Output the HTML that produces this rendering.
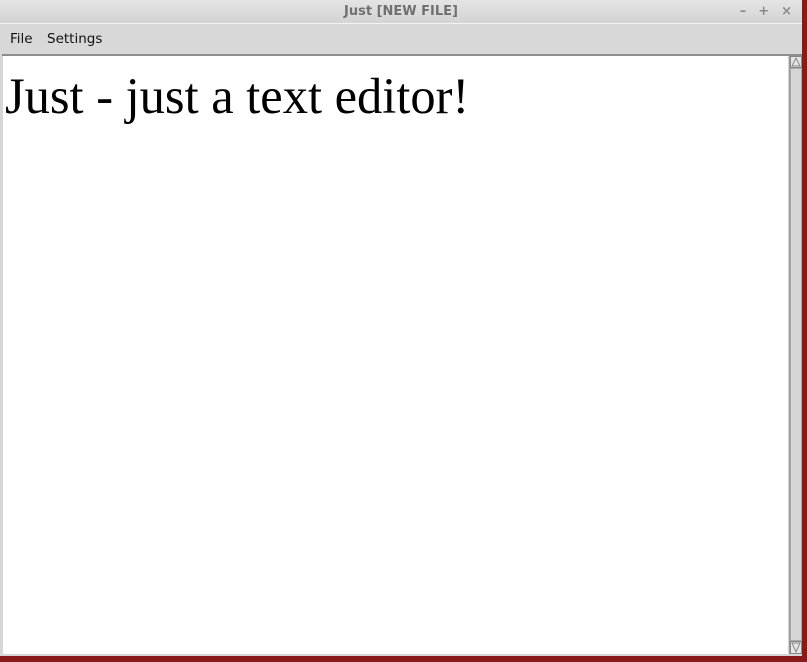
<!DOCTYPE html>
<html><head><style>
body{margin:0;width:807px;height:662px;overflow:hidden;background:#8a1a1a;position:relative;font-family:"DejaVu Sans","Liberation Sans",sans-serif}
#win{position:absolute;left:0;top:0;width:802px;height:656px;background:#d6d6d6}
#title{position:absolute;left:0;top:0;width:802px;height:22px;background:linear-gradient(#e4e4e4,#d4d4d4);text-align:center;font-size:13px;font-weight:bold;color:#707070;line-height:23px}
#ctl{position:absolute;right:10px;top:0;font-size:13px;color:#8a8a8a;line-height:24px;font-weight:bold;letter-spacing:0}
#ctl span{margin-left:12px}
#menu{position:absolute;left:0;top:23px;width:802px;height:31px;background:#d8d8d8;border-top:1px solid #f2f2f2;font-size:13.5px;line-height:30px;color:#111}
#menu span{position:absolute}
#line{position:absolute;left:2px;top:54px;width:800px;height:2px;background:#8e8e8e}
#edit{position:absolute;left:3px;top:56px;width:785px;height:598px;background:#fff;font-family:"Liberation Serif",serif;font-size:50.5px;color:#000}
#edit div{position:absolute;left:2px;top:11px;white-space:nowrap}
#sb{position:absolute;left:789px;top:56px;width:12px;height:598px;background:#d2d2d2;border-left:1px solid #999}
</style></head><body>
<div id="win">
<div id="title">Just [NEW FILE]<div id="ctl"><span>–</span><span>+</span><span>×</span></div></div>
<div id="menu"><span style="left:10px">File</span><span style="left:47px">Settings</span></div>
<div id="line"></div>
<div id="edit"><div>Just - just a text editor!</div></div>
<div id="sb">
<svg width="12" height="598" style="position:absolute;left:0;top:0">
<rect x="0.5" y="0.5" width="11" height="11" fill="#e6e6e6" stroke="#888"/>
<path d="M2 10 L6 2 L10 10 Z" fill="none" stroke="#888"/>
<rect x="0.5" y="585.5" width="11" height="12" fill="#e6e6e6" stroke="#888"/>
<path d="M2 587 L6 596 L10 587 Z" fill="none" stroke="#888"/>
<rect x="0.5" y="12.5" width="11" height="572" fill="#d6d6d6" stroke="#aaa"/>
</svg></div>
</div>
</body></html>
